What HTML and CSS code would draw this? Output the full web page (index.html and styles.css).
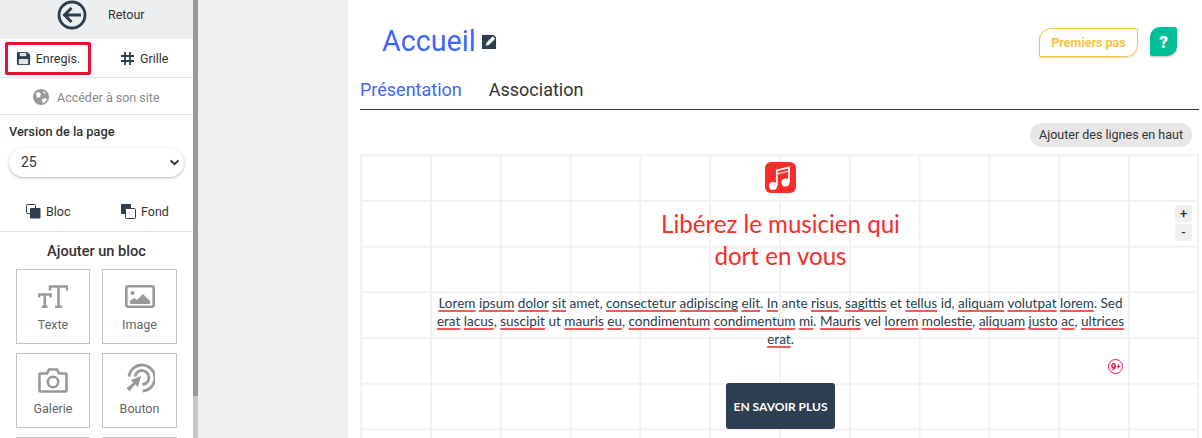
FILE: index.html
```html
<!DOCTYPE html>
<html lang="fr">
<head>
  <meta charset="UTF-8" />
  <title>Accueil</title>
  <link rel="stylesheet" href="styles.css">
</head>
<body>
  <div class="app">
    <aside class="sidebar">
      <div class="back-row">
        <svg class="back-icon" viewBox="0 0 30 30" width="30" height="30"><circle cx="15" cy="15" r="13" fill="none" stroke="#2c3e50" stroke-width="2.8"/><path d="M24 15H8M14.500 8L7.500 15l7 7" fill="none" stroke="#2c3e50" stroke-width="3"/></svg>
        <span>Retour</span>
      </div>
      <div class="tools-row">
        <div class="tool tool-save">
          <svg viewBox="0 0 16 16" width="15" height="15"><path d="M1 2.500A1.500 1.500 0 0 1 2.500 1H12l3 3v9.500A1.500 1.500 0 0 1 13.500 15h-11A1.500 1.500 0 0 1 1 13.500z" fill="#2c3e50"/><rect x="4" y="2" width="7" height="3.500" fill="#dfe3e6"/><rect x="3" y="8.500" width="10" height="5.500" fill="#dfe3e6"/></svg>
          <span>Enregis.</span>
        </div>
        <div class="tool tool-grid">
          <svg viewBox="0 0 15 15" width="15" height="15"><path d="M5 1v13M10 1v13M1 5h13M1 10h13" fill="none" stroke="#2c3e50" stroke-width="1.800"/></svg>
          <span>Grille</span>
        </div>
      </div>
      <div class="site-row">
        <svg viewBox="0 0 16 16" width="16" height="16"><circle cx="8" cy="8" r="8" fill="#999"/><path d="M3 4l3-1 2 2-1 3-3 1zM10 2l3 2-2 1zM9 10l4-1 1 2-3 3-2-1z" fill="#fff"/></svg>
        <span>Accéder à son site</span>
      </div>
      <div class="version">
        <strong>Version de la page</strong>
        <div class="select">
          <span>25</span>
          <svg viewBox="0 0 12 8" width="11" height="7"><path d="M1.500 1.500L6 6l4.500-4.500" fill="none" stroke="#333" stroke-width="2.200"/></svg>
        </div>
      </div>
      <div class="layers-row">
        <div class="layer">
          <svg viewBox="0 0 15 15" width="15" height="15"><rect x="0.500" y="0.500" width="9" height="9" rx="1" fill="#fff" stroke="#2c3e50"/><rect x="4" y="4" width="10.500" height="10.500" rx="1" fill="#2c3e50"/></svg>
          <span>Bloc</span>
        </div>
        <div class="layer">
          <svg viewBox="0 0 15 15" width="15" height="15"><rect x="0" y="0" width="10" height="10" rx="1" fill="#2c3e50"/><rect x="4.500" y="4.500" width="10" height="10" rx="1" fill="#fff" stroke="#2c3e50"/></svg>
          <span>Fond</span>
        </div>
      </div>
      <h3 class="add-title">Ajouter un bloc</h3>
      <div class="blocks">
        <div class="block">
          <svg viewBox="0 0 30 24" width="30" height="24"><path d="M12 5.500V1.500h17V5.500M20.500 1.500V21.500M17 21.800h7M1 12.500V9.500h11.500v3M6.800 9.500v12M4 21.800h5.500" fill="none" stroke="#999" stroke-width="2.600"/></svg>
          <span>Texte</span>
        </div>
        <div class="block">
          <svg viewBox="0 0 30 24" width="30" height="24"><rect x="1.300" y="1.300" width="27.400" height="20.400" rx="2" fill="none" stroke="#999" stroke-width="2.600"/><circle cx="7.500" cy="8" r="2" fill="#999"/><path d="M5 19v-3l4-3 3 2 6-6 7 7v3z" fill="#999"/></svg>
          <span>Image</span>
        </div>
        <div class="block">
          <svg viewBox="0 0 30 26" width="30" height="26"><path d="M2.500 6.500h6.500l2-4h8l2 4h6.500a1 1 0 0 1 1 1v16a1 1 0 0 1-1 1h-25a1 1 0 0 1-1-1v-16a1 1 0 0 1 1-1z" fill="none" stroke="#999" stroke-width="2.600"/><circle cx="15" cy="15" r="5.200" fill="none" stroke="#999" stroke-width="2.600"/></svg>
          <span>Galerie</span>
        </div>
        <div class="block">
          <svg viewBox="0 0 30 30" width="30" height="30"><path d="M4 13.500A13 13 0 1 1 17.500 28" fill="none" stroke="#999" stroke-width="2.800"/><path d="M10 13.500a7 7 0 1 1 7.500 8" fill="none" stroke="#999" stroke-width="2.800"/><path d="M16 13L13 24l-2.800-2.800-5.700 7-3-3 6.800-5.500L6 17z" fill="#999"/></svg>
          <span>Bouton</span>
        </div>
        <div class="block"></div>
        <div class="block"></div>
      </div>
    </aside>
    <div class="gutter"><div class="scroll-thumb"></div></div>
    <main class="main">
      <header class="page-head">
        <div class="page-title">
          <h1>Accueil</h1>
          <svg viewBox="0 0 16 16" width="15" height="15"><rect x="0" y="1" width="15" height="15" fill="#2c3e50"/><path d="M4 12.500l.8-3.300 6.700-6.700 2.500 2.500-6.700 6.700z" fill="#fff"/><path d="M12.500 1l3.500 3.500V1z" fill="#fff"/></svg>
        </div>
        <div class="head-actions">
          <span class="first-steps">Premiers pas</span>
          <span class="help">?</span>
        </div>
      </header>
      <nav class="tabs">
        <span class="tab active">Présentation</span>
        <span class="tab">Association</span>
      </nav>
      <div class="add-lines"><span>Ajouter des lignes en haut</span></div>
      <section class="canvas">
        <div class="music-row">
          <svg viewBox="0 0 31 31" width="31" height="31"><rect width="31" height="31" rx="6" fill="#f92b2b"/><path d="M11.800 24V8.500L24 5.500V20" fill="none" stroke="#fff" stroke-width="1.800"/><path d="M11.800 12L24 9" stroke="#fff" stroke-width="1.500" opacity=".7"/><circle cx="8" cy="24" r="4" fill="#fff"/><circle cx="20.500" cy="20.500" r="4" fill="#fff"/></svg>
        </div>
        <h2 class="headline">Libérez le musicien qui<br>dort en vous</h2>
        <p class="lorem">
          <u>Lorem</u> <u>ipsum</u> <u>dolor</u> <u>sit</u> amet, <u>consectetur</u> <u>adipiscing</u> <u>elit</u>. <u>In</u> ante <u>risus</u>, <u>sagittis</u> et <u>tellus</u> id, <u>aliquam</u> <u>volutpat</u> <u>lorem</u>. Sed <u>erat</u> <u>lacus</u>, <u>suscipit</u> ut <u>mauris</u> <u>eu</u>, <u>condimentum</u> <u>condimentum</u> <u>mi</u>. <u>Mauris</u> vel <u>lorem</u> <u>molestie</u>, <u>aliquam</u> <u>justo</u> <u>ac</u>, <u>ultrices</u> <u>erat</u>.
        </p>
        <div class="cta-row"><span class="cta">EN SAVOIR PLUS</span></div>
        <div class="zoom-btns"><span class="zoom-plus">+</span><span class="zoom-minus">-</span></div>
        <span class="badge">9<small>+</small></span>
      </section>
    </main>
  </div>
</body>
</html>
```

FILE: styles.css
```css
* {
  box-sizing: border-box;
}

html, body {
  margin: 0;
  height: 100%;
  overflow: hidden;
}

body {
  font-family: Roboto, sans-serif;
  font-size: 12.5px;
  color: #333;
  background: #fff;
}

.app {
  display: flex;
  height: 438px;
}

/* Barre de gauche */
.sidebar {
  width: 193px;
  flex: none;
  background: #fff;
  overflow: hidden;
}

.back-row {
  height: 39px;
  background: #eceef0;
  display: flex;
  align-items: center;
  padding: 0 0 9px 57px;
  gap: 21px;
}

.back-row span {
  margin-bottom: 2px;
}

.tools-row {
  height: 39px;
  display: flex;
  align-items: center;
  border-bottom: 1px solid #e3e3e3;
}

.tool {
  display: flex;
  align-items: center;
  gap: 5px;
}

.tool-save {
  width: 86px;
  height: 33px;
  margin-left: 5px;
  justify-content: center;
  border: 3px solid #e8112d;
  border-radius: 2px;
}

.tool-grid {
  margin-left: 29px;
}

.site-row {
  height: 37px;
  display: flex;
  align-items: center;
  gap: 8px;
  padding: 2px 0 0 33px;
  border-bottom: 1px solid #e3e3e3;
  color: #8a8a8a;
}

.version {
  padding: 9px 9px 0;
}

.version strong {
  display: block;
  font-size: 12.8px;
  font-weight: 500;
  line-height: 15px;
}

.select {
  margin-top: 9px;
  height: 29px;
  border-radius: 15px;
  box-shadow: 0 1px 3px rgba(0, 0, 0, 0.3);
  width: 175px;
  display: flex;
  align-items: center;
  justify-content: space-between;
  padding: 0 4px 0 12px;
  font-size: 14px;
}

.select span {
  margin-bottom: 2px;
}

.layers-row {
  display: flex;
  height: 55px;
  border-bottom: 1px solid #e3e3e3;
  padding: 15px 0 0 26px;
  align-items: center;
}

.layer {
  width: 95px;
  flex: none;
  display: flex;
  align-items: center;
  gap: 5px;
}

.add-title {
  margin: 11px 0 0;
  font-size: 14.6px;
  font-weight: 500;
  text-align: center;
  line-height: 16px;
}

.blocks {
  display: grid;
  grid-template-columns: 74px 75px;
  grid-auto-rows: 75px;
  gap: 9px 12px;
  padding: 10px 0 0 16px;
}

.block {
  border: 1px solid #c4c4c4;
  display: flex;
  flex-direction: column;
  align-items: center;
  justify-content: flex-end;
  gap: 8px;
  padding-bottom: 11px;
  color: #666;
}

/* Scrollbar et bande grise */
.gutter {
  width: 155px;
  flex: none;
  background: #f0f0f0;
}

.scroll-thumb {
  width: 5px;
  height: 396px;
  background: #999;
  box-shadow: 0 396px 0 #c8c8c8;
}

/* Zone principale */
.main {
  flex: 1;
  padding: 0 3px 0 12px;
  min-width: 0;
}

.page-head {
  height: 74px;
  display: flex;
  justify-content: space-between;
  padding: 22px 22px 0 22px;
}

.page-title {
  display: flex;
  align-items: center;
  gap: 6px;
  height: 38px;
}

.page-title h1 {
  margin: 0;
  font-size: 28.7px;
  font-weight: 400;
  color: #3f66ff;
}

.head-actions {
  display: flex;
  align-items: flex-start;
  gap: 12px;
  padding-top: 5px;
}

.first-steps {
  width: 99px;
  height: 29px;
  margin-top: 1px;
  border: 1px solid #f8c33c;
  border-radius: 12px 2px 12px 2px;
  color: #f8c33c;
  font-size: 12.5px;
  font-weight: 700;
  display: flex;
  align-items: center;
  justify-content: center;
  box-shadow: 0 1px 2px rgba(0, 0, 0, 0.15);
}

.help {
  width: 27px;
  height: 29px;
  background: #00bf9a;
  border-radius: 10px 2px 10px 2px;
  color: #fff;
  font-weight: 900;
  font-size: 17px;
  display: flex;
  align-items: center;
  justify-content: center;
  box-shadow: 0 1px 2px rgba(0, 0, 0, 0.25);
}

.tabs {
  height: 36px;
  display: flex;
  gap: 27px;
  border-bottom: 1px solid #333;
  font-size: 18px;
  line-height: 31px;
}

.tab.active {
  color: #3f66ff;
}

.add-lines {
  display: flex;
  justify-content: flex-end;
  padding: 13px 7px 0 0;
}

.add-lines span {
  height: 24px;
  border-radius: 12px;
  background: #e8e6e6;
  padding: 0 9px;
  line-height: 24px;
}

/* Grille de la page */
.canvas {
  position: relative;
  margin-top: 7px;
  height: 290px;
  padding-left: 2px;
  font-family: Lato, sans-serif;
  border: solid #f3f2f0;
  border-width: 2px 2px 0;
  background-color: #fff;
  background-image:
    linear-gradient(#f3f2f0 2px, transparent 2px),
    linear-gradient(90deg, #f3f2f0 2px, transparent 2px);
  background-size: 69.8px 45.7px;
  background-position: 68px 44px;
}

.music-row {
  display: flex;
  justify-content: center;
  padding-top: 6px;
}

.headline {
  margin: 15px 0 0;
  font-size: 24.1px;
  font-weight: 400;
  line-height: 32px;
  color: #f92b2b;
  text-align: center;
}

.lorem {
  margin: 22px auto 0;
  width: 700px;
  text-align: center;
  font-size: 13.55px;
  line-height: 18px;
  color: #2c3e50;
}

.lorem u {
  text-decoration: underline solid #f25c5c 2px;
  text-underline-offset: 2px;
  text-decoration-skip-ink: none;
}

.cta-row {
  display: flex;
  justify-content: center;
  margin-top: 35px;
}

.cta {
  width: 109px;
  height: 46px;
  background: #2c3e50;
  border-radius: 3px;
  color: #fff;
  font-size: 12px;
  font-weight: 700;
  display: flex;
  align-items: center;
  justify-content: center;
}

.zoom-btns {
  position: absolute;
  top: 49px;
  right: 5px;
  display: flex;
  flex-direction: column;
  gap: 2px;
  font-family: Roboto, sans-serif;
}

.zoom-btns span {
  width: 17px;
  height: 17px;
  background: #f0f0f0;
  border-radius: 3px;
  display: flex;
  align-items: center;
  justify-content: center;
  font-size: 13px;
  font-weight: 500;
}

.badge {
  position: absolute;
  top: 203px;
  left: 746px;
  width: 15px;
  height: 15px;
  border: 1.5px solid #f0144f;
  border-radius: 50%;
  color: #f0144f;
  font-family: Roboto, sans-serif;
  font-size: 9.5px;
  font-weight: 900;
  display: flex;
  align-items: center;
  justify-content: center;
}

.badge small {
  font-size: 7px;
}
```
